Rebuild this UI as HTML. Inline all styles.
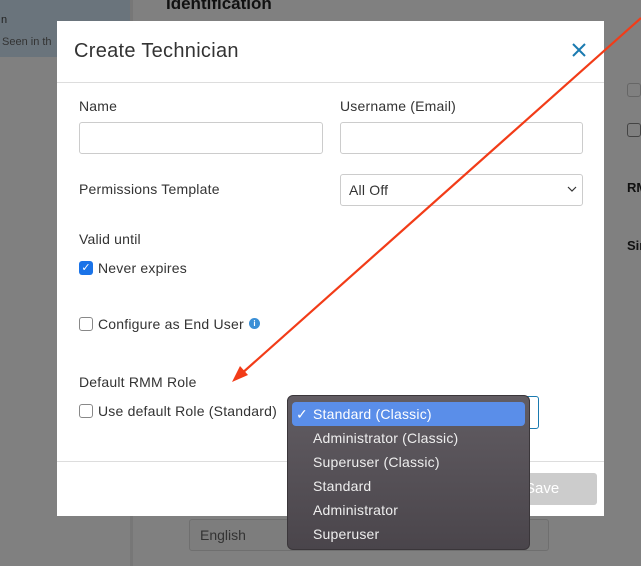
<!DOCTYPE html>
<html><head><style>
*{box-sizing:border-box;margin:0;padding:0}
body{width:641px;height:566px;overflow:hidden;background:#808080;font-family:"Liberation Sans",sans-serif;position:relative;color:#333}
.a{position:absolute}
.inp{position:absolute;border:1px solid #ccc;border-radius:3px;background:#fff;height:32px}
.lbl{position:absolute;font-size:14px;color:#333;letter-spacing:0.2px}
.cb{position:absolute;width:14px;height:14px;border:1px solid #888;border-radius:3px;background:#fff}
.dd div{height:24px;line-height:24px;padding-left:21px;font-size:14px;color:#eee;letter-spacing:0.2px}
</style></head><body>
<div class="a" style="left:0;top:0;width:130px;height:57px;background:#6a747c"></div>
<div class="a" style="left:130px;top:0;width:3px;height:566px;background:#777"></div>
<div class="a" style="left:1px;top:14px;font-size:11px;color:#222">n</div>
<div class="a" style="left:2px;top:36px;font-size:11px;color:#333">Seen in th</div>
<div class="a" style="left:166px;top:-6px;font-size:17px;font-weight:bold;color:#111">Identification</div>
<div class="a" style="left:627px;top:83px;width:14px;height:14px;border:1px solid #666;border-radius:3px"></div>
<div class="a" style="left:627px;top:123px;width:14px;height:14px;border:1px solid #444;border-radius:3px"></div>
<div class="a" style="left:627px;top:180px;font-size:13px;font-weight:bold;color:#111">RM</div>
<div class="a" style="left:627px;top:238px;font-size:13px;font-weight:bold;color:#111">Sir</div>
<div class="a" style="left:189px;top:519px;width:360px;height:32px;border:1px solid #6f6f6f;border-radius:3px;background:#7d7d7d"></div>
<div class="a" style="left:200px;top:527px;font-size:14px;color:#333">English</div>

<div class="a" style="left:57px;top:21px;width:547px;height:495px;background:#fff">
 <div class="a" style="left:17px;top:19px;font-size:20px;color:#333;letter-spacing:0.3px">Create Technician</div>
 <svg class="a" style="left:515px;top:22px" width="14" height="14"><path d="M1 1L13 13M13 1L1 13" stroke="#1a7ab0" stroke-width="2"/></svg>
 <div class="a" style="left:0;top:61px;width:547px;height:1px;background:#ddd"></div>
 <div class="lbl" style="left:22px;top:77px">Name</div>
 <div class="lbl" style="left:283px;top:77px">Username (Email)</div>
 <div class="inp" style="left:22px;top:101px;width:244px"></div>
 <div class="inp" style="left:283px;top:101px;width:243px"></div>
 <div class="lbl" style="left:22px;top:160px">Permissions Template</div>
 <div class="inp" style="left:283px;top:153px;width:243px"></div>
 <div class="lbl" style="left:292px;top:161px">All Off</div>
 <svg class="a" style="left:510px;top:165px" width="10" height="6"><path d="M1 1L5 5L9 1" stroke="#333" fill="none" stroke-width="1.2"/></svg>
 <div class="lbl" style="left:22px;top:210px">Valid until</div>
 <div class="a" style="left:22px;top:240px;width:14px;height:14px;border-radius:3px;background:#1a73e8;color:#fff;font-size:11px;line-height:14px;text-align:center">✓</div>
 <div class="lbl" style="left:41px;top:239px">Never expires</div>
 <div class="cb" style="left:22px;top:296px"></div>
 <div class="lbl" style="left:41px;top:295px">Configure as End User</div>
 <div class="a" style="left:192px;top:297px;width:11px;height:11px;border-radius:50%;background:#3a8fd6;color:#fff;font-size:8px;line-height:11px;text-align:center;font-weight:bold">i</div>
 <div class="lbl" style="left:22px;top:353px">Default RMM Role</div>
 <div class="cb" style="left:22px;top:383px"></div>
 <div class="lbl" style="left:41px;top:382px">Use default Role (Standard)</div>
 <div class="a" style="left:400px;top:375px;width:82px;height:33px;border:1px solid #1a7ab0;border-radius:3px"></div>
 <div class="a" style="left:0;top:440px;width:547px;height:1px;background:#ddd"></div>
 <div class="a" style="left:400px;top:452px;width:140px;height:32px;background:#ccc;border-radius:3px;color:#fff;font-size:15px;line-height:32px;padding-left:68px">Save</div>
</div>

<div class="a dd" style="left:287px;top:395px;width:243px;height:155px;border-radius:6px;background:linear-gradient(#625d63,#4a454b);border:1px solid #3a363a;padding-top:6px;padding-left:4px;padding-right:4px">
 <div style="background:#5a8ee9;border-radius:4px;color:#fff;position:relative"><span style="position:absolute;left:4px">✓</span>Standard (Classic)</div>
 <div>Administrator (Classic)</div>
 <div>Superuser (Classic)</div>
 <div>Standard</div>
 <div>Administrator</div>
 <div>Superuser</div>
</div>

<svg class="a" style="left:0;top:0" width="641" height="566">
 <line x1="641" y1="18" x2="240" y2="375" stroke="#f23c18" stroke-width="2.2"/>
 <polygon points="232,382 240,366 248,375" fill="#f23c18"/>
</svg>
</body></html>
